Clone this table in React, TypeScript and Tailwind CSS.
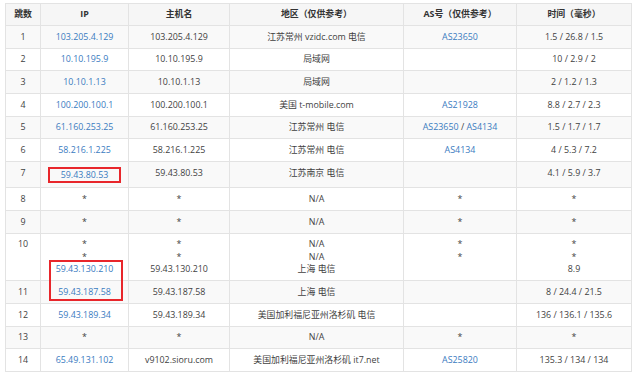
import React from 'react';

type Cell = React.ReactNode;

const A = ({ children }: { children: React.ReactNode }) => (
  <span className="text-[#3a7bbf]">{children}</span>
);

const Lines = ({ items }: { items: Cell[] }) => (
  <div className="flex flex-col items-center">
    {items.map((it, i) => (
      <div key={i}>{it}</div>
    ))}
  </div>
);

const rows: Cell[][] = [
  ['1', <A>103.205.4.129</A>, '103.205.4.129', '江苏常州 vzidc.com 电信', <A>AS23650</A>, '1.5 / 26.8 / 1.5'],
  ['2', <A>10.10.195.9</A>, '10.10.195.9', '局域网', '', '10 / 2.9 / 2'],
  ['3', <A>10.10.1.13</A>, '10.10.1.13', '局域网', '', '2 / 1.2 / 1.3'],
  ['4', <A>100.200.100.1</A>, '100.200.100.1', '美国 t-mobile.com', <A>AS21928</A>, '8.8 / 2.7 / 2.3'],
  [
    '5',
    <A>61.160.253.25</A>,
    '61.160.253.25',
    '江苏常州 电信',
    <span>
      <A>AS23650</A> / <A>AS4134</A>
    </span>,
    '1.5 / 1.7 / 1.7',
  ],
  ['6', <A>58.216.1.225</A>, '58.216.1.225', '江苏常州 电信', <A>AS4134</A>, '4 / 5.3 / 7.2'],
  [
    '7',
    <span className="inline-block border-2 border-[#e8262b] px-[11px] leading-[10px] py-px">
      <A>59.43.80.53</A>
    </span>,
    '59.43.80.53',
    '江苏南京 电信',
    '',
    '4.1 / 5.9 / 3.7',
  ],
  ['8', '*', '*', 'N/A', '*', '*'],
  ['9', '*', '*', 'N/A', '*', '*'],
  [
    '10',
    <Lines items={['*', '*', <A>59.43.130.210</A>]} />,
    <Lines items={['*', '*', '59.43.130.210']} />,
    <Lines items={['N/A', 'N/A', '上海 电信']} />,
    <Lines items={['*', '*']} />,
    <Lines items={['*', '*', '8.9']} />,
  ],
  ['11', <A>59.43.187.58</A>, '59.43.187.58', '上海 电信', '', '8 / 24.4 / 21.5'],
  ['12', <A>59.43.189.34</A>, '59.43.189.34', '美国加利福尼亚州洛杉矶 电信', '', '136 / 136.1 / 135.6'],
  ['13', '*', '*', 'N/A', '*', '*'],
  ['14', <A>65.49.131.102</A>, 'v9102.sioru.com', '美国加利福尼亚州洛杉矶 it7.net', <A>AS25820</A>, '135.3 / 134 / 134'],
];

const headers = ['跳数', 'IP', '主机名', '地区（仅供参考）', 'AS号（仅供参考）', '时间（毫秒）'];

export default function App() {
  return (
    <div
      className="w-[632px] h-[378px] bg-white pt-[3px] pl-[5px] overflow-hidden"
      style={{ fontFamily: '"Open Sans", "Noto Sans CJK SC", sans-serif' }}
    >
      <table className="table-fixed w-[626px] border-collapse text-[8.9px] leading-[12.5px] text-[#3f3f3f]">
        <colgroup>
          <col className="w-[35px]" />
          <col className="w-[88px]" />
          <col className="w-[101px]" />
          <col className="w-[174px]" />
          <col className="w-[113px]" />
          <col className="w-[115px]" />
        </colgroup>
        <thead>
          <tr className="bg-[#f6f6f6]">
            {headers.map((h) => (
              <th
                key={h}
                className="border border-[#e3e3e3] h-[22px] py-0 px-1 font-bold text-[#333] text-center align-middle"
              >
                {h}
              </th>
            ))}
          </tr>
        </thead>
        <tbody>
          {rows.map((r, i) => (
            <tr key={i} className={i % 2 === 0 ? 'bg-[#f9f9f9]' : 'bg-white'}>
              {r.map((c, j) => (
                <td
                  key={j}
                  className={`border border-[#e3e3e3] px-1 py-[4.6px] text-center align-top whitespace-nowrap ${
                    i === 9 && j === 1 ? 'relative' : ''
                  }`}
                >
                  {c}
                  {i === 9 && j === 1 && (
                    <div className="absolute left-[8px] top-[26px] w-[74px] h-[41px] border-2 border-[#e8262b] z-10" />
                  )}
                </td>
              ))}
            </tr>
          ))}
        </tbody>
      </table>
    </div>
  );
}
